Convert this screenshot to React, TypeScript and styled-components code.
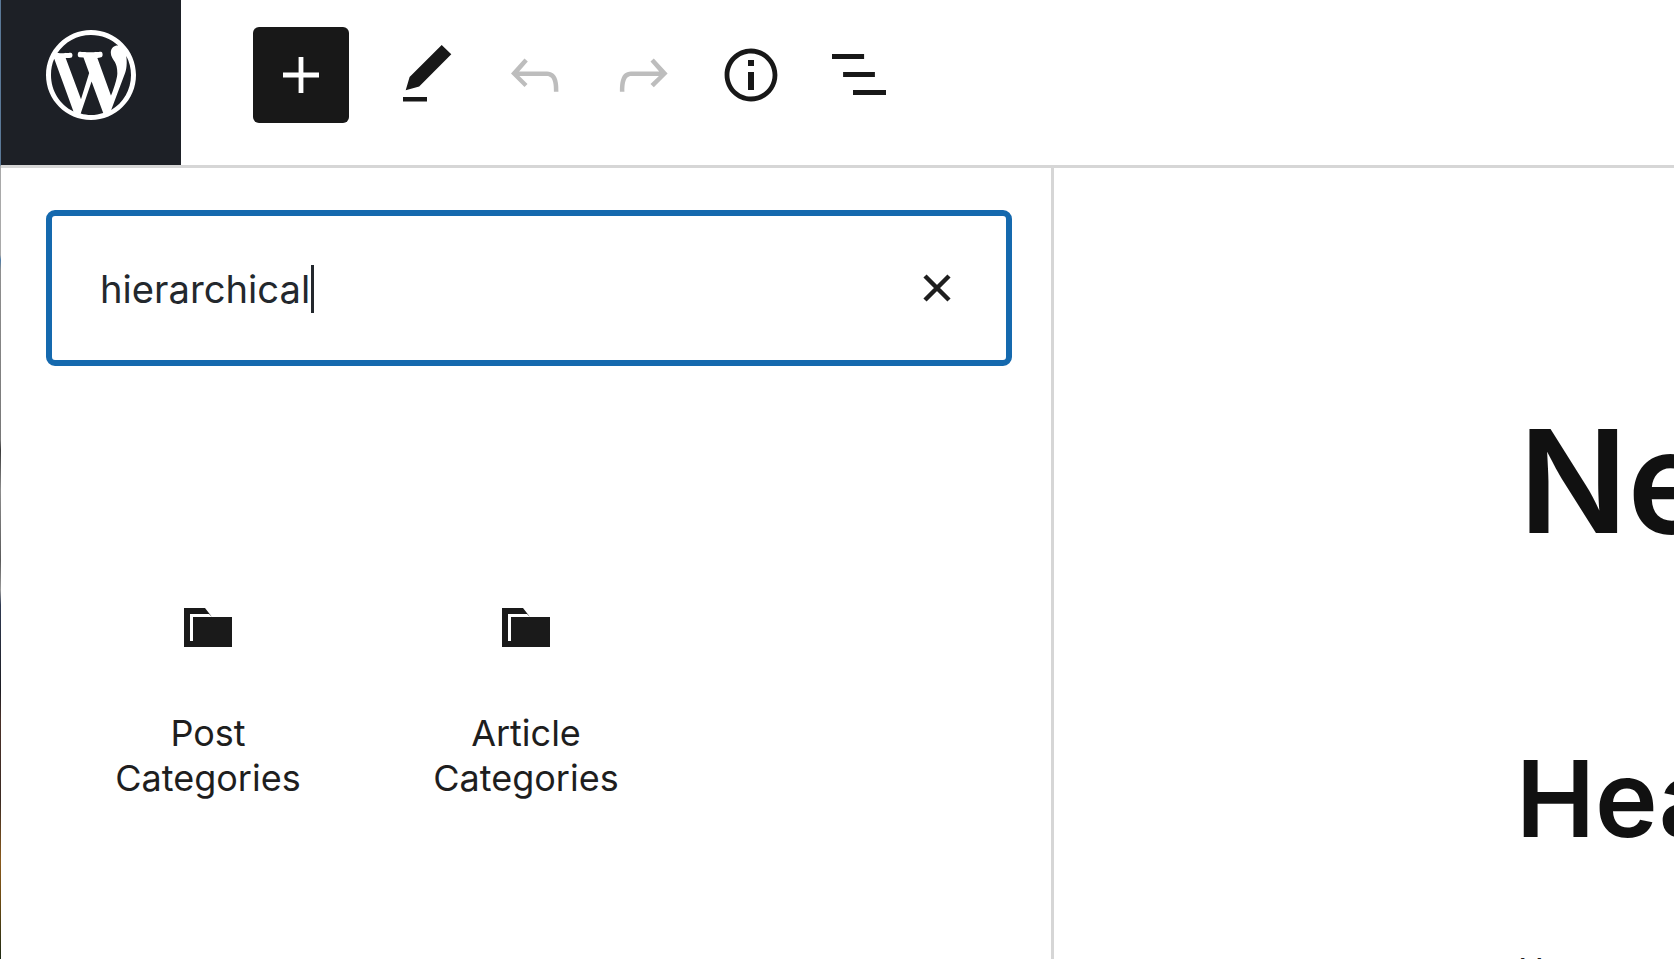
import styled, { createGlobalStyle } from "styled-components";

const GlobalStyle = createGlobalStyle`
  html, body {
    margin: 0;
    padding: 0;
    background: #fff;
  }
  body {
    font-family: Inter, "Liberation Sans", sans-serif;
    color: #1e1e1e;
  }
`;

const Page = styled.div`
  display: flex;
  width: 1674px;
  height: 959px;
  overflow: hidden;
  background: #fff;
`;

// sliver of whatever window sits behind the editor
const DesktopEdge = styled.div`
  flex: 0 0 1px;
  background: linear-gradient(
    to bottom,
    #5a7897 0,
    #5a7897 165px,
    #a9a9a9 166px,
    #a9a9a9 255px,
    #4d7ba6 260px,
    #8f8f8f 270px,
    #777 440px,
    #3a3a3a 450px,
    #8d8d8d 490px,
    #5a5a5a 560px,
    #9a9a9a 590px,
    #2f3a52 605px,
    #1c1c22 690px,
    #4a3028 720px,
    #3b2a22 800px,
    #8a5a1c 860px,
    #6b4a12 900px,
    #1d2a14 959px
  );
`;

const Editor = styled.div`
  flex: 1;
  display: flex;
  flex-direction: column;
  min-width: 0;
`;

const TopBar = styled.header`
  display: flex;
  flex: 0 0 165px;
  border-bottom: 3px solid #d6d6d6;
`;

const LogoTile = styled.div`
  flex: 0 0 180px;
  display: flex;
  align-items: center;
  justify-content: center;
  box-sizing: border-box;
  padding-bottom: 15px;
  background: #1d2026;
  color: #fff;

  svg {
    width: 90px;
    height: 90px;
    fill: currentColor;
  }
`;

const Tools = styled.div`
  display: flex;
  align-items: center;
  padding-left: 72px;
  padding-bottom: 15px;
  box-sizing: border-box;
`;

const InserterButton = styled.button`
  display: flex;
  align-items: center;
  justify-content: center;
  width: 96px;
  height: 96px;
  margin-right: 24px;
  padding: 0;
  border: 0;
  border-radius: 6px;
  background: #181818;
  color: #fff;
`;

const ToolButton = styled.button<{ $disabled?: boolean }>`
  display: flex;
  align-items: center;
  justify-content: center;
  width: 108px;
  height: 96px;
  padding: 0;
  border: 0;
  background: none;
  color: ${(p) => (p.$disabled ? "#bdbdbd" : "#181818")};
`;

const Icon = styled.svg`
  display: block;
  width: 72px;
  height: 72px;
  fill: currentColor;
`;

const Body = styled.div`
  flex: 1;
  display: flex;
  min-height: 0;
`;

const Inserter = styled.aside`
  flex: 0 0 1053px;
  box-sizing: border-box;
  border-right: 3px solid #d6d6d6;
  padding: 42px 39px 0 45px;
`;

const SearchBox = styled.div`
  display: flex;
  align-items: center;
  justify-content: space-between;
  box-sizing: border-box;
  height: 156px;
  padding: 0 55px 0 48px;
  border: 6px solid #1569ae;
  border-radius: 9px;
`;

const SearchValue = styled.div`
  display: flex;
  align-items: center;
  font-size: 38.2px;
  color: #23282d;
  line-height: 48px;
  padding-top: 1px;
`;

const Caret = styled.span`
  width: 3px;
  height: 48px;
  margin-left: 1px;
  background: #23282d;
`;

const ClearIcon = styled.svg`
  display: block;
  width: 28px;
  height: 28px;
  stroke: #1e1e1e;
  stroke-width: 4.5;
  fill: none;
`;

const BlockGrid = styled.div`
  display: grid;
  grid-template-columns: repeat(3, 318px);
  margin: 242px 0 0 3px;
`;

const BlockItem = styled.div`
  display: flex;
  flex-direction: column;
  align-items: center;
`;

const FolderIcon = styled.svg`
  display: block;
  width: 48px;
  height: 39px;
  fill: #1a1a1a;
`;

const BlockLabel = styled.span`
  width: 220px;
  margin-top: 64px;
  font-size: 36px;
  line-height: 45px;
  text-align: center;
  color: #1e1e1e;
`;

const Canvas = styled.main`
  flex: 1;
  min-width: 0;
  overflow: hidden;
  padding-left: 463px;
  white-space: nowrap;
`;

const PostTitle = styled.h1`
  margin: 0 0 0 2px;
  padding-top: 228px;
  font-size: 143px;
  line-height: 170px;
  font-weight: 600;
  color: #111;
`;

const SectionHeading = styled.h2`
  margin: 0 0 0 -1px;
  padding-top: 168px;
  font-size: 106px;
  line-height: 130px;
  font-weight: 600;
  color: #111;
`;

const Paragraph = styled.p`
  margin: 0 0 0 1px;
  padding-top: 82px;
  font-size: 35px;
  line-height: 50px;
  color: #1e1e1e;
`;

const FolderGlyph = () => (
  <FolderIcon viewBox="0 0 48 39">
    <path
      fillRule="evenodd"
      d="M0 0h21l7 9h20v30H0V0zM6 6v27h3V9h19l-3-3H6z"
    />
  </FolderIcon>
);

const blocks = ["Post Categories", "Article Categories"];

export default function App() {
  return (
    <Page>
      <GlobalStyle />
      <DesktopEdge />
      <Editor>
        <TopBar>
          <LogoTile>
            <svg viewBox="0 0 20 20">
              <path d="M20 10c0-5.51-4.49-10-10-10C4.48 0 0 4.49 0 10c0 5.52 4.48 10 10 10 5.51 0 10-4.48 10-10zM7.78 15.37L4.37 6.22c.55-.02 1.17-.08 1.17-.08.5-.06.44-1.13-.06-1.11 0 0-1.45.11-2.37.11-.18 0-.37 0-.58-.01C4.12 2.69 6.87 1.11 10 1.11c2.33 0 4.45.87 6.05 2.34-.68-.11-1.65.39-1.65 1.58 0 .74.45 1.36.9 2.1.35.61.55 1.36.55 2.46 0 1.49-1.4 5-1.4 5l-3.03-8.37c.54-.02.82-.17.82-.17.5-.05.44-1.25-.06-1.22 0 0-1.44.12-2.38.12-.87 0-2.33-.12-2.33-.12-.5-.03-.56 1.2-.06 1.22l.92.08 1.26 3.41zM17.41 10c.24-.64.74-1.87.43-4.25.7 1.29 1.05 2.71 1.05 4.25 0 3.29-1.73 6.24-4.4 7.78.97-2.59 1.94-5.2 2.92-7.78zM6.1 18.09C3.12 16.65 1.11 13.53 1.11 10c0-1.3.23-2.48.72-3.59C3.25 10.3 4.67 14.2 6.1 18.09zm4.03-6.63l2.58 6.98c-.86.29-1.76.45-2.71.45-.79 0-1.57-.11-2.29-.33.81-2.38 1.62-4.74 2.42-7.1z" />
            </svg>
          </LogoTile>
          <Tools>
            <InserterButton>
              <Icon viewBox="0 0 24 24">
                <path d="M18 11.2h-5.2V6h-1.6v5.2H6v1.6h5.2V18h1.6v-5.2H18z" />
              </Icon>
            </InserterButton>
            <ToolButton>
              <Icon viewBox="0 0 24 24">
                <path d="M20.1 5.1L16.9 2 6.2 12.7l-1.3 4.4 4.5-1.3L20.1 5.1zM4 20.8h8v-1.5H4v1.5z" />
              </Icon>
            </ToolButton>
            <ToolButton $disabled>
              <Icon viewBox="0 0 24 24">
                <path d="M18.3 11.7c-.6-.6-1.4-.9-2.3-.9H6.7l2.9-3.3-1.1-1-4.5 5L8.5 16l1-1-2.7-2.7H16c.5 0 .9.2 1.3.5 1 1 1 3.4 1 4.5v.3h1.5v-.2c0-1.5 0-4.3-1.5-5.7z" />
              </Icon>
            </ToolButton>
            <ToolButton $disabled>
              <Icon viewBox="0 0 24 24">
                <path d="M15.6 6.5l-1.1 1 2.9 3.3H8c-.9 0-1.7.3-2.3.9-1.4 1.5-1.4 4.2-1.4 5.7v.2h1.5v-.3c0-1.1 0-3.5 1-4.5.3-.3.7-.5 1.3-.5h9.2L14.5 15l1.1 1.1 4.6-4.6-4.6-5z" />
              </Icon>
            </ToolButton>
            <ToolButton>
              <Icon viewBox="0 0 24 24">
                <path d="M12 3.2c-4.8 0-8.8 3.9-8.8 8.8 0 4.8 3.9 8.8 8.8 8.8 4.8 0 8.8-3.9 8.8-8.8 0-4.8-4-8.8-8.8-8.8zm0 16c-4 0-7.2-3.3-7.2-7.2C4.8 8 8 4.8 12 4.8s7.2 3.3 7.2 7.2c0 4-3.2 7.2-7.2 7.2zM11 17h2v-6h-2v6zm0-8h2V7h-2v2z" />
              </Icon>
            </ToolButton>
            <ToolButton>
              <Icon viewBox="0 0 24 24">
                <path d="M3 5h10.7v1.7H3zM6.7 11h10.6v1.7H6.7zM10 17h11v1.7H10z" />
              </Icon>
            </ToolButton>
          </Tools>
        </TopBar>
        <Body>
          <Inserter>
            <SearchBox>
              <SearchValue>
                hierarchical
                <Caret />
              </SearchValue>
              <ClearIcon viewBox="0 0 28 28">
                <path d="M2 2l24 24M26 2L2 26" />
              </ClearIcon>
            </SearchBox>
            <BlockGrid>
              {blocks.map((name) => (
                <BlockItem key={name}>
                  <FolderGlyph />
                  <BlockLabel>{name}</BlockLabel>
                </BlockItem>
              ))}
            </BlockGrid>
          </Inserter>
          <Canvas>
            <PostTitle>New Post</PostTitle>
            <SectionHeading>Heading</SectionHeading>
            <Paragraph>Hea</Paragraph>
          </Canvas>
        </Body>
      </Editor>
    </Page>
  );
}
